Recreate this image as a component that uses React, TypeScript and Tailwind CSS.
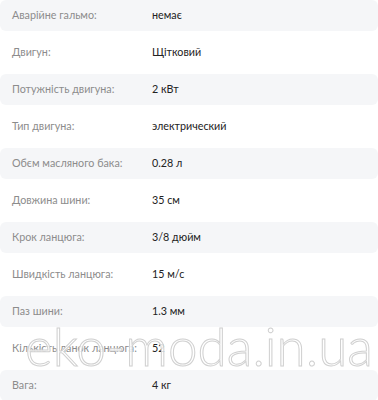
const rows: [string, string][] = [
  ["Аварійне гальмо:", "немає"],
  ["Двигун:", "Щітковий"],
  ["Потужність двигуна:", "2 кВт"],
  ["Тип двигуна:", "электрический"],
  ["Обєм масляного бака:", "0.28 л"],
  ["Довжина шини:", "35 см"],
  ["Крок ланцюга:", "3/8 дюйм"],
  ["Швидкість ланцюга:", "15 м/с"],
  ["Паз шини:", "1.3 мм"],
  ["Кількість ланок ланцюга:", "52"],
  ["Вага:", "4 кг"],
];

export default function App() {
  return (
    <div className="relative h-[400px] w-[378px] overflow-hidden bg-white font-['Lato',sans-serif] text-[10.75px]">
      <div className="flex flex-col">
        {rows.map(([label, value], i) => (
          <div
            key={label}
            className={
              i % 2 === 0
                ? "flex h-[31px] items-center rounded-md bg-[#f5f6f8] pl-3"
                : "flex h-[43px] items-center pl-3"
            }
          >
            <span className="w-[140px] shrink-0 whitespace-nowrap text-[#8c8c8c]">{label}</span>
            <span className="whitespace-nowrap text-[#222]">{value}</span>
          </div>
        ))}
      </div>

      {/* водяний знак */}
      <div className="pointer-events-none absolute left-[25px] top-[319px] whitespace-nowrap font-['Lato',sans-serif] text-[53px] font-light leading-none text-white/85 [-webkit-text-stroke:1px_#d0d0d0]">
        eko-moda.in.ua
      </div>
    </div>
  );
}
